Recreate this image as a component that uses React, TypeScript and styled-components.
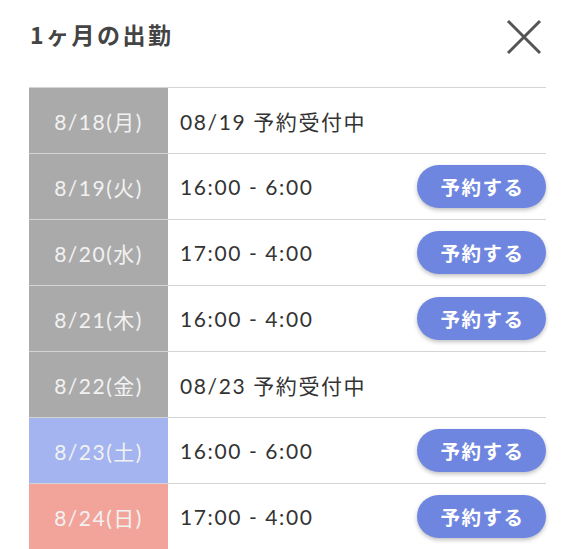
import React from "react";
import styled, { createGlobalStyle } from "styled-components";

const Global = createGlobalStyle`
  html, body { margin: 0; padding: 0; background: #fff; }
  body { font-family: Lato, "Noto Sans CJK JP", sans-serif; }
`;

const Page = styled.div`
  width: 576px;
  height: 549px;
  overflow: hidden;
  background: #fff;
`;

const Header = styled.div`
  display: flex;
  align-items: center;
  justify-content: space-between;
  height: 74px;
  padding: 0 34px 0 30px;
  box-sizing: border-box;
`;

const Title = styled.h2`
  margin: 0 0 6px 0;
  font-family: "Noto Sans CJK JP", sans-serif;
  font-size: 23px;
  font-weight: 700;
  color: #444;
  letter-spacing: 2.5px;
`;

const Close = styled.button`
  border: 0;
  background: none;
  padding: 0;
  width: 36px;
  height: 36px;
  display: flex;
  align-items: center;
  justify-content: center;
`;

const Table = styled.div`
  margin: 13px 0 0 29px;
  width: 517px;
  display: flex;
  flex-direction: column;
`;

const Row = styled.div`
  display: grid;
  grid-template-columns: 139px 1fr;
  height: 66px;
  box-sizing: border-box;
  border-top: 1.5px solid #d4d4d4;
`;

const DateCell = styled.div<{ $kind: "normal" | "sat" | "sun" }>`
  display: flex;
  align-items: center;
  justify-content: center;
  background: ${(p) =>
    p.$kind === "sat" ? "#a3b4f0" : p.$kind === "sun" ? "#f2a49b" : "#aaaaaa"};
  color: #f2f2f2;
  font-size: 21px;
  letter-spacing: 1.5px;
`;

const Body = styled.div`
  display: flex;
  align-items: center;
  justify-content: space-between;
  padding-left: 12px;
  font-size: 21px;
  color: #333;
  letter-spacing: 1.6px;
`;

const Reserve = styled.button`
  width: 129px;
  height: 43px;
  border: 0;
  border-radius: 22px;
  background: #6f86e0;
  color: #fff;
  font-family: "Noto Sans CJK JP", sans-serif;
  font-size: 19.5px;
  font-weight: 700;
  letter-spacing: 1.5px;
  padding: 0 0 0 2px;
  box-shadow: 0 2px 4px rgba(0, 0, 0, 0.25);
`;

type Item = { date: string; kind: "normal" | "sat" | "sun"; text: string; btn: boolean };

const items: Item[] = [
  { date: "8/18(月)", kind: "normal", text: "08/19 予約受付中", btn: false },
  { date: "8/19(火)", kind: "normal", text: "16:00 - 6:00", btn: true },
  { date: "8/20(水)", kind: "normal", text: "17:00 - 4:00", btn: true },
  { date: "8/21(木)", kind: "normal", text: "16:00 - 4:00", btn: true },
  { date: "8/22(金)", kind: "normal", text: "08/23 予約受付中", btn: false },
  { date: "8/23(土)", kind: "sat", text: "16:00 - 6:00", btn: true },
  { date: "8/24(日)", kind: "sun", text: "17:00 - 4:00", btn: true },
];

export default function App() {
  return (
    <Page>
      <Global />
      <Header>
        <Title>1ヶ月の出勤</Title>
        <Close aria-label="close">
          <svg width="36" height="36" viewBox="0 0 36 36">
            <path d="M2 2 L34 34 M34 2 L2 34" stroke="#555" strokeWidth="3" fill="none" />
          </svg>
        </Close>
      </Header>
      <Table>
        {items.map((it) => (
          <Row key={it.date}>
            <DateCell $kind={it.kind}>{it.date}</DateCell>
            <Body>
              <span>{it.text}</span>
              {it.btn && <Reserve>予約する</Reserve>}
            </Body>
          </Row>
        ))}
      </Table>
    </Page>
  );
}
